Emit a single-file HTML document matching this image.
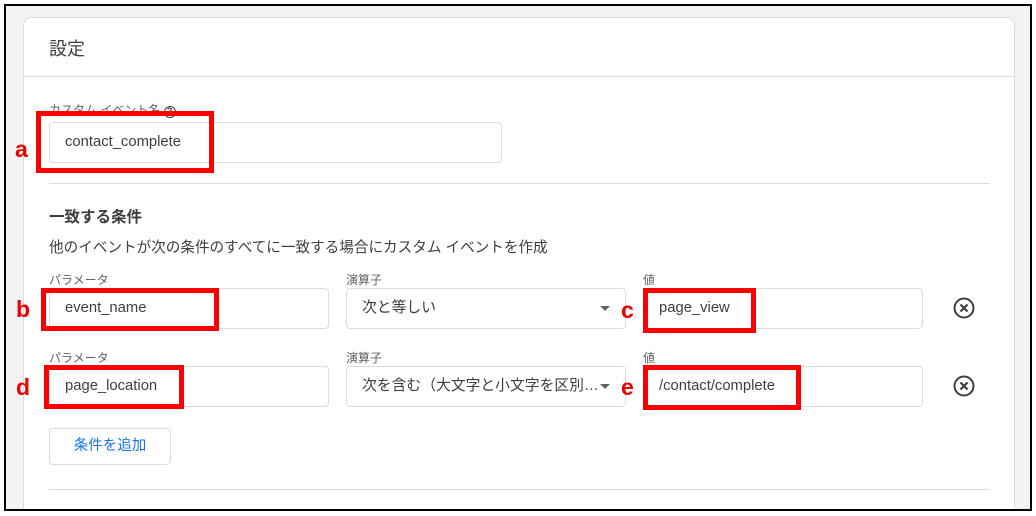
<!DOCTYPE html>
<html><head><meta charset="utf-8"><style>
*{margin:0;padding:0;box-sizing:border-box}
body{width:1036px;height:516px;background:#fff;position:relative;overflow:hidden;font-family:"Liberation Sans","Noto Sans CJK JP",sans-serif;color:#3c4043}
.a{position:absolute}
.frame{left:4px;top:4px;width:1028px;height:507px;border:2px solid #000;background:#f1f3f4;overflow:hidden}
.card{left:17px;top:11px;width:992px;height:520px;background:#fff;border:1px solid #dadce0;border-radius:8px}
.inp{position:absolute;height:41px;border:1px solid #dadce0;border-radius:4px;background:#fff;font-size:14.8px;color:#3c4043;padding-left:15px;line-height:39px;white-space:nowrap}
.lbl{position:absolute;font-size:12px;color:#5f6368}
.red{position:absolute;border:5px solid #f00}
.let{position:absolute;color:#e00;font-weight:bold;font-size:23px;line-height:1}
.hr{position:absolute;height:1px;background:#dadce0}
.arrow{position:absolute;width:0;height:0;border-left:5px solid transparent;border-right:5px solid transparent;border-top:5px solid #5f6368}
</style></head><body>
<div class="a frame"><div class="a card"></div></div>
<div class="a" style="left:49px;top:35px;font-size:18px;color:#3c4043">設定</div>
<div class="hr" style="left:24px;top:76px;width:990px"></div>
<div class="lbl" style="left:49px;top:101px">カスタム イベント名 <span style="display:inline-block;width:12px;height:12px;border:1.5px solid #3c4043;border-radius:50%;font-size:9px;line-height:9px;text-align:center;font-weight:bold;color:#3c4043">?</span></div>
<div class="inp" style="left:49px;top:122px;width:453px">contact_complete</div>
<div class="red" style="left:36px;top:111px;width:178px;height:62px"></div>
<div class="let" style="left:15px;top:138px">a</div>
<div class="hr" style="left:49px;top:183px;width:941px"></div>
<div class="a" style="left:49px;top:205px;font-size:15.5px;font-weight:bold;color:#3c4043">一致する条件</div>
<div class="a" style="left:49px;top:236px;font-size:14.6px;color:#3c4043;white-space:nowrap">他のイベントが次の条件のすべてに一致する場合にカスタム イベントを作成</div>

<div class="lbl" style="left:49px;top:271px">パラメータ</div>
<div class="lbl" style="left:346px;top:271px">演算子</div>
<div class="lbl" style="left:643px;top:271px">値</div>
<div class="inp" style="left:49px;top:288px;width:280px">event_name</div>
<div class="inp" style="left:346px;top:288px;width:280px">次と等しい</div>
<div class="arrow" style="left:600px;top:306px"></div>
<div class="inp" style="left:643px;top:288px;width:280px">page_view</div>
<svg class="a" style="left:952px;top:296px" width="24" height="24" viewBox="0 0 24 24"><circle cx="12" cy="12" r="9.5" fill="none" stroke="#3c4043" stroke-width="2"/><path d="M8.5 8.5L15.5 15.5M15.5 8.5L8.5 15.5" stroke="#3c4043" stroke-width="2.2"/></svg>

<div class="lbl" style="left:49px;top:349px">パラメータ</div>
<div class="lbl" style="left:346px;top:349px">演算子</div>
<div class="lbl" style="left:643px;top:349px">値</div>
<div class="inp" style="left:49px;top:366px;width:280px">page_location</div>
<div class="inp" style="left:346px;top:366px;width:280px;overflow:hidden">次を含む（大文字と小文字を区別…</div>
<div class="arrow" style="left:600px;top:384px"></div>
<div class="inp" style="left:643px;top:366px;width:280px">/contact/complete</div>
<svg class="a" style="left:952px;top:374px" width="24" height="24" viewBox="0 0 24 24"><circle cx="12" cy="12" r="9.5" fill="none" stroke="#3c4043" stroke-width="2"/><path d="M8.5 8.5L15.5 15.5M15.5 8.5L8.5 15.5" stroke="#3c4043" stroke-width="2.2"/></svg>

<div class="a" style="left:49px;top:428px;width:122px;height:37px;border:1px solid #dadce0;border-radius:4px;background:#fff;color:#1a73e8;font-size:14.5px;text-align:center;line-height:35px">条件を追加</div>
<div class="hr" style="left:49px;top:489px;width:941px"></div>

<div class="red" style="left:41px;top:288px;width:178px;height:43px"></div>
<div class="let" style="left:16px;top:298px">b</div>
<div class="red" style="left:643px;top:288px;width:113px;height:45px"></div>
<div class="let" style="left:621px;top:299px">c</div>
<div class="red" style="left:44px;top:365px;width:140px;height:44px"></div>
<div class="let" style="left:16px;top:376px">d</div>
<div class="red" style="left:643px;top:365px;width:158px;height:45px"></div>
<div class="let" style="left:621px;top:376px">e</div>
</body></html>
